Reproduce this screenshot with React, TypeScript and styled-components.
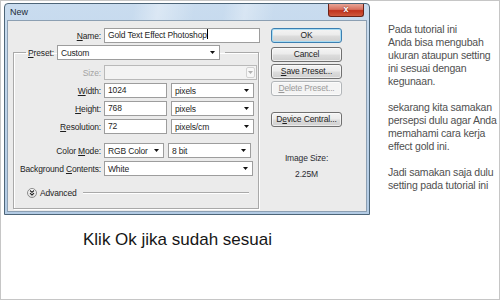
import React from 'react';
import styled, { createGlobalStyle } from 'styled-components';

const GlobalStyle = createGlobalStyle`
  html, body {
    margin: 0;
    padding: 0;
    background: #fff;
  }
  body {
    width: 500px;
    height: 300px;
    overflow: hidden;
  }
`;

const uiFont = `"Liberation Sans", Arial, sans-serif`;

const Frame = styled.div`
  box-sizing: border-box;
  width: 500px;
  height: 300px;
  border: 1px solid #c6c6c6;
  background: #fff;
  display: flex;
  flex-direction: column;
  font-family: ${uiFont};
`;

const Top = styled.div`
  display: flex;
  align-items: flex-start;
  padding: 2px 0 0 3px;
`;

const Dialog = styled.div`
  box-sizing: border-box;
  flex: none;
  width: 366px;
  height: 212px;
  border: 1px solid #4d6578;
  border-radius: 4px 4px 0 0;
  background: linear-gradient(#c9dcef, #b3cbe4);
  padding: 0 2px 2px;
  display: flex;
  flex-direction: column;
`;

const TitleBar = styled.div`
  height: 16px;
  flex: none;
  display: flex;
  align-items: flex-start;
  justify-content: space-between;
  background:
    linear-gradient(100deg, rgba(255,255,255,0) 35%, rgba(255,255,255,0.35) 42%, rgba(255,255,255,0) 52%),
    linear-gradient(100deg, rgba(255,255,255,0) 60%, rgba(255,255,255,0.3) 66%, rgba(255,255,255,0) 74%);
`;

const TitleText = styled.span`
  font-size: 9px;
  color: #1c2a38;
  padding: 3px 0 0 3px;
`;

const CloseButton = styled.div`
  width: 34px;
  height: 12px;
  margin-right: 3px;
  border: 1px solid #6a2419;
  border-top: none;
  border-radius: 0 0 3px 3px;
  background: linear-gradient(#e8a597 0%, #d7705e 45%, #c0321d 55%, #cf5a3e 100%);
  color: #fff;
  font-size: 9px;
  font-weight: bold;
  line-height: 11px;
  text-align: center;
  text-shadow: 0 0 2px #5a1208;
`;

const Client = styled.div`
  flex: 1;
  display: flex;
  align-items: flex-start;
  background: #ebebeb;
  border: 1px solid #8c9fb2;
  padding-top: 7px;
  font-size: 8.5px;
  letter-spacing: -0.15px;
  color: #1e1e1e;
`;

const LeftColumn = styled.div`
  display: flex;
  flex-direction: column;
  width: 252px;
`;

const FieldRow = styled.div<{ $label: number; $spaced?: boolean }>`
  display: grid;
  grid-template-columns: ${({ $label }) => $label}px auto;
  column-gap: 3px;
  align-items: center;
  height: 15px;
  margin-top: ${({ $spaced }) => ($spaced ? '6px' : '0')};
`;

const Label = styled.label<{ $disabled?: boolean }>`
  text-align: right;
  white-space: nowrap;
  color: ${({ $disabled }) => ($disabled ? '#a3a3a3' : '#1e1e1e')};
`;

const Controls = styled.div`
  display: flex;
  gap: 4px;
`;

const TextBox = styled.div<{ $w: number }>`
  box-sizing: border-box;
  width: ${({ $w }) => $w}px;
  height: 15px;
  background: #fff;
  border: 1px solid #9d9d9d;
  padding: 0 3px;
  line-height: 13px;
  white-space: nowrap;
  overflow: hidden;
`;

const Caret = styled.span`
  display: inline-block;
  width: 1px;
  height: 10px;
  background: #000;
  vertical-align: -1px;
`;

const Combo = styled.div<{ $w: number; $disabled?: boolean }>`
  box-sizing: border-box;
  width: ${({ $w }) => $w}px;
  height: 15px;
  display: flex;
  align-items: center;
  justify-content: space-between;
  background: ${({ $disabled }) => ($disabled ? '#f3f3f3' : '#fff')};
  border: 1px solid ${({ $disabled }) => ($disabled ? '#b9b9b9' : '#9d9d9d')};
  padding: 0 4px 0 3px;
  white-space: nowrap;
`;

const DisabledDrop = styled.span`
  box-sizing: border-box;
  width: 9px;
  height: 11px;
  margin-right: -3px;
  border: 1px solid #d2d2d2;
  border-radius: 2px;
  background: #f7f7f7;
  display: flex;
  align-items: center;
  justify-content: center;
`;

const Arrow = ({ color = '#111' }: { color?: string }) => (
  <svg width="5" height="3" viewBox="0 0 5 3">
    <path d="M0 0H5L2.5 3Z" fill={color} />
  </svg>
);

const GroupBox = styled.fieldset`
  box-sizing: border-box;
  width: 246px;
  margin: 2px 0 0 5px;
  padding: 5px 0 10px 0;
  border: 1px solid #a9a9a9;
  box-shadow: inset 1px 1px 0 #fff, 1px 1px 0 #fff;
  min-width: 0;
`;

const Legend = styled.legend`
  display: flex;
  align-items: center;
  gap: 3px;
  margin-left: 12px;
  padding: 0 5px 0 2px;
`;

const Stack = styled.div`
  display: flex;
  flex-direction: column;
  gap: 3px;
`;

const AdvancedRow = styled.div`
  display: flex;
  align-items: center;
  gap: 3px;
  margin: 11px 9px 0 13px;
  height: 11px;
`;

const AdvancedIcon = styled.span`
  box-sizing: border-box;
  width: 10px;
  height: 10px;
  border: 1px solid #8a8a8a;
  border-radius: 50%;
  background: linear-gradient(#ffffff, #dcdcdc);
  display: flex;
  align-items: center;
  justify-content: center;
`;

const Rule = styled.span`
  flex: 1;
  height: 1px;
  margin-left: 3px;
  background: #a9a9a9;
  border-bottom: 1px solid #fff;
`;

const RightColumn = styled.div`
  display: flex;
  flex-direction: column;
  align-items: center;
  width: 71px;
  margin-left: 11px;
`;

const Button = styled.div<{ $gap?: number; $default?: boolean; $disabled?: boolean }>`
  box-sizing: border-box;
  width: 71px;
  height: 15px;
  margin-top: ${({ $gap }) => $gap ?? 0}px;
  border: 1px solid ${({ $default, $disabled }) => ($default ? '#3c7fb1' : $disabled ? '#b1b5b8' : '#707070')};
  border-radius: 3px;
  background: ${({ $disabled }) =>
    $disabled ? '#f4f4f4' : 'linear-gradient(#f4f4f4 0%, #ebebeb 48%, #dddddd 52%, #cfcfcf 100%)'};
  box-shadow: ${({ $default }) => ($default ? 'inset 0 0 0 1px #a8dcf3' : 'inset 0 0 0 1px rgba(255,255,255,0.6)')};
  color: ${({ $disabled }) => ($disabled ? '#9a9a9a' : '#1e1e1e')};
  text-align: center;
  line-height: 13px;
  white-space: nowrap;
`;

const SizeInfo = styled.div<{ $gap: number }>`
  margin-top: ${({ $gap }) => $gap}px;
  color: #2b2b33;
  line-height: 10px;
`;

const SideNote = styled.div`
  margin-left: 18px;
  padding-top: 20px;
  font-size: 10.5px;
  letter-spacing: -0.2px;
  line-height: 13px;
  color: #505050;
  white-space: nowrap;
  p {
    margin: 0 0 13px;
  }
`;

const Caption = styled.div`
  margin-top: 15px;
  padding-left: 82px;
  font-size: 17px;
  color: #161616;
`;

export default function App() {
  return (
    <>
      <GlobalStyle />
      <Frame>
        <Top>
          <Dialog>
            <TitleBar>
              <TitleText>New</TitleText>
              <CloseButton>x</CloseButton>
            </TitleBar>
            <Client>
              <LeftColumn>
                <FieldRow $label={93}>
                  <Label><u>N</u>ame:</Label>
                  <TextBox $w={156}>Gold Text Effect Photoshop<Caret /></TextBox>
                </FieldRow>
                <GroupBox>
                  <Legend>
                    <Label><u>P</u>reset:</Label>
                    <Combo $w={163}>Custom<Arrow /></Combo>
                  </Legend>
                  <Stack>
                    <FieldRow $label={87}>
                      <Label $disabled>Size:</Label>
                      <Combo $w={153} $disabled>
                        <span />
                        <DisabledDrop><Arrow color="#b0b0b0" /></DisabledDrop>
                      </Combo>
                    </FieldRow>
                    <FieldRow $label={87}>
                      <Label><u>W</u>idth:</Label>
                      <Controls>
                        <TextBox $w={63}>1024</TextBox>
                        <Combo $w={83}>pixels<Arrow /></Combo>
                      </Controls>
                    </FieldRow>
                    <FieldRow $label={87}>
                      <Label><u>H</u>eight:</Label>
                      <Controls>
                        <TextBox $w={63}>768</TextBox>
                        <Combo $w={83}>pixels<Arrow /></Combo>
                      </Controls>
                    </FieldRow>
                    <FieldRow $label={87}>
                      <Label><u>R</u>esolution:</Label>
                      <Controls>
                        <TextBox $w={63}>72</TextBox>
                        <Combo $w={83}>pixels/cm<Arrow /></Combo>
                      </Controls>
                    </FieldRow>
                    <FieldRow $label={87} $spaced>
                      <Label>Color <u>M</u>ode:</Label>
                      <Controls>
                        <Combo $w={60}>RGB Color<Arrow /></Combo>
                        <Combo $w={83}>8 bit<Arrow /></Combo>
                      </Controls>
                    </FieldRow>
                    <FieldRow $label={87}>
                      <Label>Background <u>C</u>ontents:</Label>
                      <Combo $w={149}>White<Arrow /></Combo>
                    </FieldRow>
                  </Stack>
                  <AdvancedRow>
                    <AdvancedIcon>
                      <svg width="6" height="6" viewBox="0 0 6 6">
                        <path d="M1 0.5L3 2.3L5 0.5M1 3.2L3 5L5 3.2" fill="none" stroke="#222" strokeWidth="1.1" />
                      </svg>
                    </AdvancedIcon>
                    <span>Advanced</span>
                    <Rule />
                  </AdvancedRow>
                </GroupBox>
              </LeftColumn>
              <RightColumn>
                <Button $default>OK</Button>
                <Button $gap={4}>Cancel</Button>
                <Button $gap={2}><u>S</u>ave Preset...</Button>
                <Button $gap={2} $disabled><u>D</u>elete Preset...</Button>
                <Button $gap={16}>D<u>e</u>vice Central...</Button>
                <SizeInfo $gap={26}>Image Size:</SizeInfo>
                <SizeInfo $gap={6}>2.25M</SizeInfo>
              </RightColumn>
            </Client>
          </Dialog>
          <SideNote>
            <p>Pada tutorial ini<br />Anda bisa mengubah<br />ukuran ataupun setting<br />ini sesuai dengan<br />kegunaan.</p>
            <p>sekarang kita samakan<br />persepsi dulu agar Anda<br />memahami cara kerja<br />effect gold ini.</p>
            <p>Jadi samakan saja dulu<br />setting pada tutorial ini</p>
          </SideNote>
        </Top>
        <Caption>Klik Ok jika sudah sesuai</Caption>
      </Frame>
    </>
  );
}
